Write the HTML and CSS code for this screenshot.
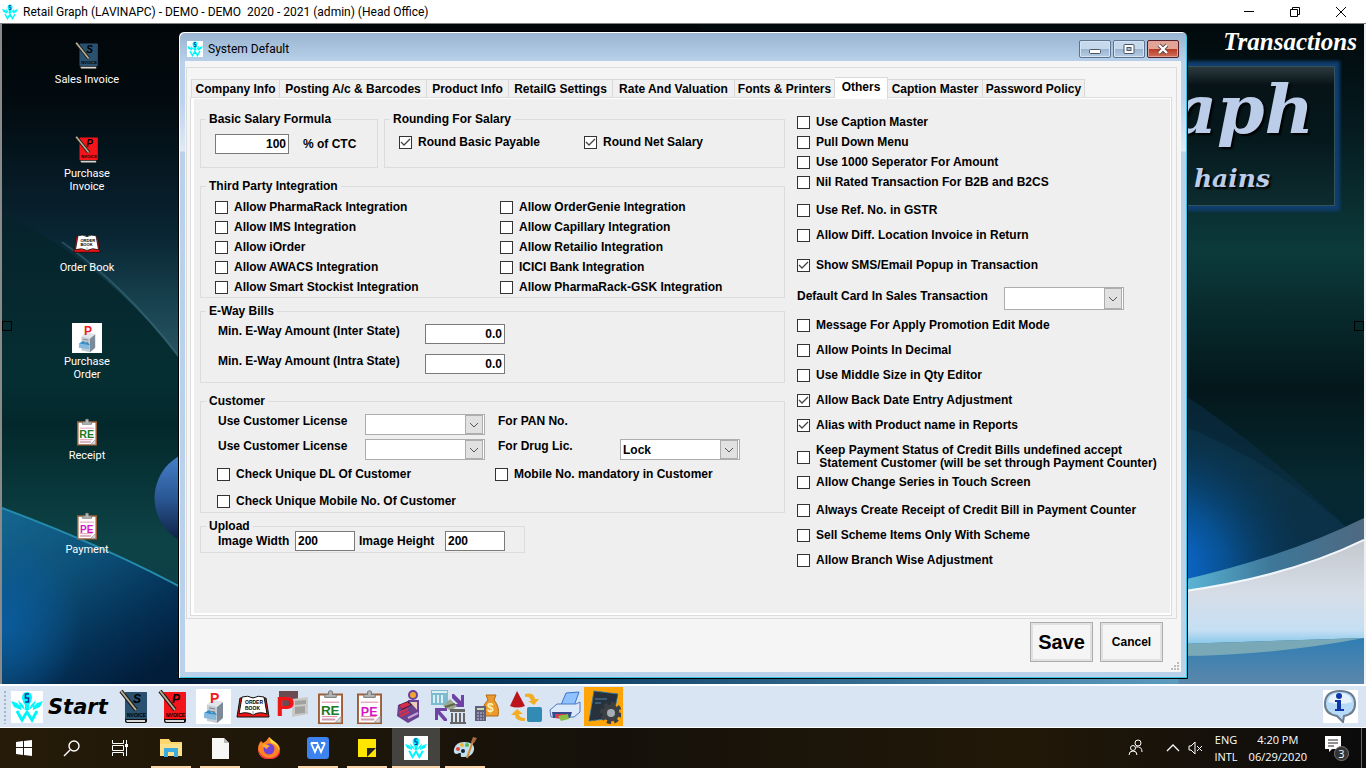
FILE: index.html
```
<!DOCTYPE html>
<html lang="en">
<head>
    <meta charset="UTF-8">
    <meta name="viewport" content="width=device-width, initial-scale=1.0">
    <title>Retail Graph</title>
    <link rel="stylesheet" href="styles.css">
</head>
<body>

    <!-- shared icons -->
    <svg class="icon-defs" width="0" height="0" aria-hidden="true">
        <symbol id="logo" viewBox="0 0 32 32">
            <path d="M16 1Q21 1 21 7Q20 12 18 14V19H14V14Q12 12 11 7Q11 1 16 1Z" fill="#00f6fb"/>
            <path d="M18 3H14.500V7H17.500V11H14" fill="none" stroke="#12309a" stroke-width="1.600"/>
            <path d="M0 10L6 12L10 16L10 19L3 16ZM32 10L26 12L22 16L22 19L29 16ZM7 9L12 14L14 19L9 15ZM25 9L20 14L18 19L23 15Z" fill="#00f6fb"/>
            <path d="M6 20L11 29L16 21L21 29L26 20" fill="none" stroke="#00f6fb" stroke-width="3"/>
        </symbol>
        <symbol id="book-blue" viewBox="0 0 32 36">
            <rect x="7" y="3" width="22" height="31" rx="2" fill="#111"/>
            <rect x="7" y="3" width="22" height="27" rx="1" fill="#2a516f"/>
            <path d="M8 31H27V33H9Z" fill="#d7d7d7"/>
        </symbol>
        <symbol id="book-red" viewBox="0 0 32 36">
            <rect x="7" y="3" width="22" height="31" rx="2" fill="#111"/>
            <rect x="7" y="3" width="22" height="27" rx="1" fill="#f5141a"/>
            <path d="M8 31H27V33H9Z" fill="#d7d7d7"/>
        </symbol>
        <symbol id="pen" viewBox="0 0 32 36">
            <path d="M3 2L18 21" stroke="#17191a" stroke-width="4"/>
            <path d="M3 2L18 21" stroke="#b8ae91" stroke-width="2"/>
        </symbol>
        <symbol id="cabinet" viewBox="0 0 35 35">
            <rect width="35" height="35" fill="#fff"/>
            <path d="M11 16L17 11L27 13V29L21 34L11 32Z" fill="#c3ccd3"/>
            <path d="M21 18L27 13V29L21 34Z" fill="#7c8b97"/>
            <path d="M11 16L17 11L27 13L21 18Z" fill="#e0e6ea"/>
            <path d="M8 24L20 26V31L8 29Z" fill="#86b9de"/>
            <path d="M8 24L13 21L16 24L18 22L21 26Z" fill="#2f8fcc"/>
            <path d="M13 19L19 20M13 22L19 23" stroke="#74828e"/>
        </symbol>
        <symbol id="open-book" viewBox="0 0 34 24">
            <path d="M4 3L1 22H33L30 3Z" fill="#f01414" stroke="#111"/>
            <path d="M6 2Q12 0 17 3Q22 0 28 2L31 19Q23 16 17 20Q11 16 3 19Z" fill="#fff" stroke="#111"/>
            <path d="M17 16V20" stroke="#999"/>
        </symbol>
        <symbol id="clipboard" viewBox="0 0 26 36">
            <path d="M1 5H25V35H1Z" fill="#fff" stroke="#a05c34" stroke-width="2"/>
            <path d="M7 8V5H11Q10 1 13 1Q16 1 15 5H19V8Z" fill="#b5b5b5" stroke="#777"/>
            <path d="M4 13H22M4 28H20" stroke="#dc7f9d"/>
            <path d="M4 31H18" stroke="#d09ab0" stroke-width="2"/>
            <path d="M18 34L24 28V34Z" fill="#ddd" stroke="#999"/>
        </symbol>
    </svg>

    <header class="titlebar">
        <svg class="titlebar-logo"><use href="#logo"/></svg>
        <h1>Retail Graph (LAVINAPC) - DEMO - DEMO&nbsp; 2020 - 2021 (admin) (Head Office)</h1>
        <button type="button" aria-label="Minimize"><svg width="12" height="12"><path d="M1 5.500H11" stroke="#000"/></svg></button>
        <button type="button" aria-label="Restore"><svg width="12" height="12"><path d="M1.500 3.500H8.500V10.500H1.500ZM3.500 3.500V1.500H10.500V8.500H8.500" fill="none" stroke="#000"/></svg></button>
        <button type="button" aria-label="Close"><svg width="12" height="12"><path d="M1 1L11 11M11 1L1 11" stroke="#000"/></svg></button>
    </header>

    <main class="desktop">
        <svg class="wallpaper" viewBox="0 0 1366 660" preserveAspectRatio="none" aria-hidden="true">
            <defs>
                <linearGradient id="night" x1="0" y1="0" x2="0" y2="1">
                    <stop offset="0" stop-color="#010609"/>
                    <stop offset="0.120" stop-color="#020b10"/>
                    <stop offset="0.320" stop-color="#092533"/>
                    <stop offset="0.420" stop-color="#17414e"/>
                    <stop offset="0.560" stop-color="#35606f"/>
                </linearGradient>
                <linearGradient id="green" x1="0" y1="0" x2="0" y2="1">
                    <stop offset="0" stop-color="#06222a"/>
                    <stop offset="0.350" stop-color="#052f33"/>
                    <stop offset="0.450" stop-color="#03282b"/>
                    <stop offset="0.700" stop-color="#0d4347"/>
                    <stop offset="1" stop-color="#0b3646"/>
                </linearGradient>
                <linearGradient id="blue" x1="0" y1="0" x2="0.700" y2="1">
                    <stop offset="0" stop-color="#146791"/>
                    <stop offset="0.400" stop-color="#0d5179"/>
                    <stop offset="0.750" stop-color="#043055"/>
                    <stop offset="1" stop-color="#021d3a"/>
                </linearGradient>
                <radialGradient id="glow">
                    <stop offset="0" stop-color="#0a5b9d"/>
                    <stop offset="1" stop-color="#0a5b9d" stop-opacity="0"/>
                </radialGradient>
                <linearGradient id="ball" x1="0" y1="0" x2="0" y2="1">
                    <stop offset="0" stop-color="#4a86d0"/>
                    <stop offset="0.500" stop-color="#2a5795"/>
                    <stop offset="1" stop-color="#0b1a38"/>
                </linearGradient>
                <linearGradient id="right" x1="0" y1="0" x2="0" y2="1">
                    <stop offset="0" stop-color="#01090b"/>
                    <stop offset="0.150" stop-color="#05191e"/>
                    <stop offset="0.350" stop-color="#0c3a3b"/>
                    <stop offset="0.480" stop-color="#062427"/>
                    <stop offset="0.560" stop-color="#03171b"/>
                    <stop offset="0.700" stop-color="#06282f"/>
                    <stop offset="0.850" stop-color="#03263a"/>
                </linearGradient>
                <radialGradient id="azure" cx="1165" cy="545" r="145" gradientUnits="userSpaceOnUse">
                    <stop offset="0" stop-color="#0c6fe0"/>
                    <stop offset="0.450" stop-color="#08508f"/>
                    <stop offset="1" stop-color="#063556" stop-opacity="0"/>
                </radialGradient>
                <linearGradient id="silver" x1="0" y1="0" x2="0" y2="1">
                    <stop offset="0" stop-color="#c3c8ce"/>
                    <stop offset="0.500" stop-color="#d6dde6"/>
                    <stop offset="0.850" stop-color="#c6dff4"/>
                    <stop offset="1" stop-color="#7fc4e6"/>
                </linearGradient>
                <linearGradient id="band" x1="0" y1="0" x2="1" y2="0">
                    <stop offset="0" stop-color="#5dbbdc"/>
                    <stop offset="0.500" stop-color="#3d7799"/>
                    <stop offset="1" stop-color="#4f6980"/>
                </linearGradient>
                <linearGradient id="sea" x1="0" y1="0" x2="0" y2="1">
                    <stop offset="0" stop-color="#2f7eb4"/>
                    <stop offset="1" stop-color="#5b87ab"/>
                </linearGradient>
                <linearGradient id="shore" x1="0" y1="0" x2="1" y2="0">
                    <stop offset="0" stop-color="#021d3a"/>
                    <stop offset="0.350" stop-color="#0a3a60"/>
                    <stop offset="1" stop-color="#5d9dc0"/>
                </linearGradient>
            </defs>
            <rect width="700" height="660" fill="url(#night)"/>
            <path d="M0 190Q110 240 190 350V660H0Z" fill="url(#green)"/>
            <path d="M60 218Q130 266 190 350" fill="none" stroke="#3c7480" stroke-opacity="0.500" stroke-width="2"/>
            <path d="M0 484Q110 525 190 569V660H0Z" fill="url(#blue)"/>
            <ellipse cx="0" cy="600" rx="80" ry="90" fill="url(#glow)"/>
            <path d="M0 484Q110 525 190 569" fill="none" stroke="#258bad" stroke-width="2"/>
            <circle cx="201" cy="474" r="48" fill="url(#ball)"/>
            <rect x="178" y="650" width="1012" height="10" fill="url(#shore)"/>
            <rect x="700" width="666" height="650" fill="url(#right)"/>
            <path d="M1180 367Q1270 425 1366 520V600H1180Z" fill="#0c2f4b" fill-opacity="0.500"/>
            <path d="M1180 400Q1280 438 1366 520V600H1180Z" fill="#123b55" fill-opacity="0.400"/>
            <path d="M1180 400H1366V600H1180Z" fill="url(#azure)"/>
            <path d="M1180 557Q1290 532 1366 494V516Q1290 553 1180 568Z" fill="url(#band)"/>
            <path d="M1180 568Q1290 553 1366 516V622H1180Z" fill="url(#silver)"/>
            <path d="M1180 568Q1290 553 1366 516" fill="none" stroke="#f1f6fc" stroke-width="2"/>
            <path d="M1180 620L1366 614V660H1180Z" fill="url(#sea)"/>
            <path d="M1180 620L1366 614Q1270 632 1180 632Z" fill="#79a9b7"/>
        </svg>

        <div class="brand">
            <span class="brand-name">aph</span>
            <span class="brand-tag">hains</span>
        </div>
        <h2 class="menu-title">Transactions</h2>
        <span class="handle handle-left"></span>
        <span class="handle handle-right"></span>

        <nav class="shortcuts">
            <a href="#">
                <svg width="28" height="30" viewBox="0 0 32 36"><use href="#book-blue"/><text x="15" y="14" class="glyph glyph-script">S</text><text x="9" y="28" class="glyph glyph-tiny">NVOICE</text><use href="#pen"/></svg>
                <span>Sales Invoice</span>
            </a>
            <a href="#">
                <svg width="28" height="30" viewBox="0 0 32 36"><use href="#book-red"/><text x="15" y="14" class="glyph glyph-script">P</text><text x="9" y="28" class="glyph glyph-tiny">NVOICE</text><use href="#pen"/></svg>
                <span>Purchase<br>Invoice</span>
            </a>
            <a href="#">
                <svg width="28" height="20" viewBox="0 0 34 24"><use href="#open-book"/><text x="9" y="9" class="glyph glyph-tiny">ORDER</text><text x="9" y="15" class="glyph glyph-tiny">BOOK</text></svg>
                <span>Order Book</span>
            </a>
            <a href="#">
                <svg width="30" height="30" viewBox="0 0 35 35"><use href="#cabinet"/><text x="14" y="14" class="glyph glyph-po">P</text></svg>
                <span>Purchase<br>Order</span>
            </a>
            <a href="#">
                <svg width="20" height="30" viewBox="0 0 26 36"><use href="#clipboard"/><text x="3" y="26" class="glyph glyph-re">RE</text></svg>
                <span>Receipt</span>
            </a>
            <a href="#">
                <svg width="20" height="30" viewBox="0 0 26 36"><use href="#clipboard"/><text x="4" y="27" class="glyph glyph-pe">PE</text></svg>
                <span>Payment</span>
            </a>
        </nav>

        <form class="window" onsubmit="return false">
            <div class="window-head">
                <svg class="window-logo"><use href="#logo"/></svg>
                <h2>System Default</h2>
                <button type="button" class="caption" aria-label="Minimize"><svg width="12" height="12"><rect x="0.500" y="6.500" width="11" height="4" rx="1" fill="#fff" stroke="#4b5563"/></svg></button>
                <button type="button" class="caption" aria-label="Maximize"><svg width="12" height="12"><rect x="1" y="1.500" width="10" height="9" rx="1" fill="#fff" stroke="#4b5563"/><rect x="4" y="4.500" width="4" height="3" fill="#a9c0d8" stroke="#4b5563"/></svg></button>
                <button type="button" class="caption caption-close" aria-label="Close"><svg width="12" height="12"><path d="M2 2L10 10M10 2L2 10" stroke="#5d4040" stroke-width="4"/><path d="M2 2L10 10M10 2L2 10" stroke="#fff" stroke-width="2.400"/></svg></button>
            </div>

            <div class="client">
                <div class="tab-panel">
                    <div class="tabs" role="tablist">
                        <button type="button" role="tab">Company Info</button>
                        <button type="button" role="tab">Posting A/c &amp; Barcodes</button>
                        <button type="button" role="tab">Product Info</button>
                        <button type="button" role="tab">RetailG Settings</button>
                        <button type="button" role="tab">Rate And Valuation</button>
                        <button type="button" role="tab">Fonts &amp; Printers</button>
                        <button type="button" role="tab" class="active" aria-selected="true">Others</button>
                        <button type="button" role="tab">Caption Master</button>
                        <button type="button" role="tab">Password Policy</button>
                    </div>

                    <div class="page">
                        <div class="col-left">
                            <div class="salary-row">
                                <fieldset>
                                    <legend>Basic Salary Formula</legend>
                                    <div class="salary">
                                        <input type="text" class="num" id="basic" value="100">
                                        <label for="basic">% of CTC</label>
                                    </div>
                                </fieldset>
                                <fieldset>
                                    <legend>Rounding For Salary</legend>
                                    <div class="rounding">
                                        <label class="check"><input type="checkbox" checked>Round Basic Payable</label>
                                        <label class="check"><input type="checkbox" checked>Round Net Salary</label>
                                    </div>
                                </fieldset>
                            </div>

                            <fieldset>
                                <legend>Third Party Integration</legend>
                                <div class="third-party">
                                    <label class="check"><input type="checkbox">Allow PharmaRack Integration</label>
                                    <label class="check"><input type="checkbox">Allow OrderGenie Integration</label>
                                    <label class="check"><input type="checkbox">Allow IMS Integration</label>
                                    <label class="check"><input type="checkbox">Allow Capillary Integration</label>
                                    <label class="check"><input type="checkbox">Allow iOrder</label>
                                    <label class="check"><input type="checkbox">Allow Retailio Integration</label>
                                    <label class="check"><input type="checkbox">Allow AWACS Integration</label>
                                    <label class="check"><input type="checkbox">ICICI Bank Integration</label>
                                    <label class="check"><input type="checkbox">Allow Smart Stockist Integration</label>
                                    <label class="check"><input type="checkbox">Allow PharmaRack-GSK Integration</label>
                                </div>
                            </fieldset>

                            <fieldset class="near">
                                <legend>E-Way Bills</legend>
                                <div class="eway">
                                    <label for="inter">Min. E-Way Amount (Inter State)</label>
                                    <input type="text" class="num" id="inter" value="0.0">
                                    <label for="intra">Min. E-Way Amount (Intra State)</label>
                                    <input type="text" class="num" id="intra" value="0.0">
                                </div>
                            </fieldset>

                            <fieldset>
                                <legend>Customer</legend>
                                <div class="license">
                                    <label for="lic1">Use Customer License</label>
                                    <span class="combo"><select id="lic1"><option></option></select><svg class="arrow"><path d="M4 7L8 11L12 7" fill="none" stroke="#555"/></svg></span>
                                    <span>For PAN No.</span>
                                    <span></span>
                                    <label for="lic2">Use Customer License</label>
                                    <span class="combo"><select id="lic2"><option></option></select><svg class="arrow"><path d="M4 7L8 11L12 7" fill="none" stroke="#555"/></svg></span>
                                    <label for="drug">For Drug Lic.</label>
                                    <span class="combo"><select id="drug"><option>Lock</option></select><svg class="arrow"><path d="M4 7L8 11L12 7" fill="none" stroke="#555"/></svg></span>
                                </div>
                                <div class="unique">
                                    <label class="check"><input type="checkbox">Check Unique DL Of Customer</label>
                                    <label class="check"><input type="checkbox">Mobile No. mandatory in Customer</label>
                                    <label class="check"><input type="checkbox">Check Unique Mobile No. Of Customer</label>
                                </div>
                            </fieldset>

                            <fieldset class="near upload-box">
                                <legend>Upload</legend>
                                <div class="upload">
                                    <label for="imgw">Image Width</label>
                                    <input type="text" id="imgw" value="200">
                                    <label for="imgh">Image Height</label>
                                    <input type="text" id="imgh" value="200">
                                </div>
                            </fieldset>
                        </div>

                        <div class="col-right">
                            <div class="checks tight">
                                <label class="check"><input type="checkbox">Use Caption Master</label>
                                <label class="check"><input type="checkbox">Pull Down Menu</label>
                                <label class="check"><input type="checkbox">Use 1000 Seperator For Amount</label>
                                <label class="check"><input type="checkbox">Nil Rated Transaction For B2B and B2CS</label>
                            </div>
                            <div class="checks">
                                <label class="check"><input type="checkbox">Use Ref. No. in GSTR</label>
                                <label class="check"><input type="checkbox">Allow Diff. Location Invoice in Return</label>
                            </div>
                            <div class="checks sms">
                                <label class="check"><input type="checkbox" checked>Show SMS/Email Popup in Transaction</label>
                            </div>
                            <div class="card-row">
                                <label for="card">Default Card In Sales Transaction</label>
                                <span class="combo"><select id="card"><option></option></select><svg class="arrow"><path d="M4 8L8 12L12 8" fill="none" stroke="#555"/></svg></span>
                            </div>
                            <div class="checks after-card">
                                <label class="check"><input type="checkbox">Message For Apply Promotion Edit Mode</label>
                                <label class="check"><input type="checkbox">Allow Points In Decimal</label>
                                <label class="check"><input type="checkbox">Use Middle Size in Qty Editor</label>
                                <label class="check"><input type="checkbox" checked>Allow Back Date Entry Adjustment</label>
                                <label class="check"><input type="checkbox" checked>Alias with Product name in Reports</label>
                            </div>
                            <div class="checks">
                                <label class="check check-two"><input type="checkbox"><span>Keep Payment Status of Credit Bills undefined accept<br>&nbsp;Statement Customer (will be set through Payment Counter)</span></label>
                                <label class="check after-two"><input type="checkbox">Allow Change Series in Touch Screen</label>
                            </div>
                            <div class="checks">
                                <label class="check"><input type="checkbox">Always Create Receipt of Credit Bill in Payment Counter</label>
                                <label class="check"><input type="checkbox">Sell Scheme Items Only With Scheme</label>
                                <label class="check"><input type="checkbox">Allow Branch Wise Adjustment</label>
                            </div>
                        </div>
                    </div>
                </div>

                <div class="actions">
                    <button type="submit" class="save">Save</button>
                    <button type="button">Cancel</button>
                </div>
                <svg class="grip" width="9" height="9"><path d="M6 0h2v2h-2zM3 3h2v2h-2zM6 3h2v2h-2zM0 6h2v2h-2zM3 6h2v2h-2zM6 6h2v2h-2z" fill="#bdbdbd"/></svg>
            </div>
        </form>
    </main>

    <div class="toolbar">
        <svg class="drag" width="4" height="34"><path d="M2 1V34" stroke="#a9b4c2" stroke-width="2" stroke-dasharray="2 2"/></svg>
        <button type="button" class="start"><svg width="32" height="32"><use href="#logo"/></svg>Start</button>
        <div class="tools">
            <button type="button" aria-label="Sales Invoice">
                <svg width="32" height="36" viewBox="0 0 32 36"><use href="#book-blue"/><text x="15" y="14" class="glyph glyph-script">S</text><text x="9" y="28" class="glyph glyph-tiny">NVOICE</text><use href="#pen"/></svg>
            </button>
            <button type="button" aria-label="Purchase Invoice">
                <svg width="32" height="36" viewBox="0 0 32 36"><use href="#book-red"/><text x="15" y="14" class="glyph glyph-script">P</text><text x="9" y="28" class="glyph glyph-tiny">NVOICE</text><use href="#pen"/></svg>
            </button>
            <button type="button" class="split" aria-label="Purchase Order">
                <svg width="35" height="35" viewBox="0 0 35 35"><use href="#cabinet"/><text x="14" y="14" class="glyph glyph-po">P</text></svg>
            </button>
            <button type="button" aria-label="Order Book">
                <svg width="34" height="24" viewBox="0 0 34 24"><use href="#open-book"/><text x="9" y="9" class="glyph glyph-tiny">ORDER</text><text x="9" y="15" class="glyph glyph-tiny">BOOK</text></svg>
            </button>
            <button type="button" aria-label="Purchase Return">
                <svg width="34" height="36"><path d="M4 2H23V18H4Z" fill="#6b4a52"/><path d="M17 10L33 8V25L17 28Z" fill="#c9c9c6"/><path d="M20 12L31 11V15L20 16ZM20 18L30 17V24L20 25Z" fill="#a1a29f"/><text x="1" y="27" class="glyph glyph-big">P</text></svg>
            </button>
            <button type="button" aria-label="Receipt">
                <svg width="25" height="36" viewBox="0 0 26 36"><use href="#clipboard"/><text x="3" y="26" class="glyph glyph-re">RE</text></svg>
            </button>
            <button type="button" aria-label="Payment">
                <svg width="25" height="36" viewBox="0 0 26 36"><use href="#clipboard"/><text x="4" y="27" class="glyph glyph-pe">PE</text></svg>
            </button>
            <button type="button" aria-label="Cash Counter">
                <svg width="28" height="36"><circle cx="18" cy="6" r="4" fill="#f2a531" stroke="#6b3f9e" stroke-width="2"/><path d="M14 12H23V25L13 22Z" fill="#e6d0b8" stroke="#6b3f9e" stroke-width="2"/><path d="M3 16L14 12L24 23V28L13 34L2 27Z" fill="#6a4390"/><path d="M4 16L13 12L17 16L7 21Z" fill="#3b1a30"/><path d="M5 17L13 14M6 19L15 15M4 24L13 20M5 27L14 23" stroke="#d42e4c" stroke-width="2"/><path d="M13 29L23 24" stroke="#c6a2d8" stroke-width="2"/></svg>
            </button>
            <button type="button" aria-label="Bank Transfer">
                <svg width="36" height="36"><rect x="1" y="1" width="17" height="15" fill="#7dbcd0"/><path d="M2 3H17M4 6V14M8 6V14M12 6V14" stroke="#dceff4" stroke-width="2"/><path d="M22 5L24 5L31 12V6H34V18H22V15H28L22 9Z" fill="#6f43a6"/><path d="M17 32H14L8 25V31H5V19H17V22H10L17 30Z" fill="#6f43a6"/><path d="M13 17L20 10L27 17L21 22Z" fill="#9aa68d"/><path d="M15 18L25 15" stroke="#5a6647" stroke-width="2"/><path d="M20 20H35V23H20Z" fill="#666"/><path d="M22 24V33M26 24V33M30 24V33M34 24V33M20 34H36" stroke="#666" stroke-width="2"/></svg>
            </button>
            <button type="button" aria-label="Accounts">
                <svg width="26" height="30"><path d="M12 3H22L20 8Q26 15 24 24H10Q6 16 14 8Z" fill="#ec9a2c" stroke="#b56a14"/><text x="13" y="20" class="glyph glyph-money">$</text><rect x="1" y="14" width="11" height="15" fill="#61617f"/><path d="M3 17H10" stroke="#c9dcaa" stroke-width="2"/><path d="M3 21H10M3 24H10M3 27H10" stroke="#c3c3d4" stroke-dasharray="2 1"/></svg>
            </button>
            <button type="button" aria-label="Convert">
                <svg width="34" height="34"><path d="M8 1L16 16Q8 19 1 16Z" fill="#bb151b"/><path d="M16 4Q25 2 26 9L30 9L25 15L19 11H22Q21 6 16 7Z" fill="#f3ae26"/><path d="M16 31Q6 31 6 25H2L8 19L14 24H10Q10 28 16 28Z" fill="#f3ae26"/><rect x="18" y="17" width="15" height="15" rx="2" fill="#318bb5"/></svg>
            </button>
            <button type="button" aria-label="Print">
                <svg width="34" height="34"><path d="M13 15L18 3L31 2L26 16Z" fill="#8fc2ff" stroke="#3974cd"/><path d="M2 20L9 14H28L32 12V22L26 27H3Z" fill="#dce9fb" stroke="#4d78c0"/><path d="M4 22H24L22 28H5Z" fill="#35488c"/><path d="M7 24H17L14 29L7 28Z" fill="#d73c4b"/><path d="M10 26L20 24L21 29L13 31Z" fill="#88bd45"/></svg>
            </button>
            <button type="button" class="tool-on" aria-label="System Default">
                <svg width="34" height="36"><path d="M7 2L31 5L26 29L2 32Z" fill="#27323c" stroke="#2e79a8" stroke-dasharray="4 1"/><path d="M8 10H20M8 14H14" stroke="#4c88ae"/><circle cx="24" cy="24" r="6" fill="none" stroke="#3c4045" stroke-width="5"/><circle cx="24" cy="24" r="9" fill="none" stroke="#3c4045" stroke-width="4" stroke-dasharray="4 3"/><circle cx="24" cy="24" r="4" fill="#a5adb5"/></svg>
            </button>
        </div>
        <button type="button" class="info" aria-label="Help">
            <svg width="35" height="33"><rect width="35" height="33" fill="#fff"/><path d="M17 1Q32 1 32 14Q32 24 21 26L20 32L14 26Q2 24 2 14Q2 1 17 1Z" fill="#b6daf8" stroke="#6c7c8c" stroke-width="2"/><path d="M17 3Q28 3 29 12Q17 16 5 12Q6 3 17 3Z" fill="#e6f3ff"/><circle cx="16" cy="6" r="3" fill="#0f37a8"/><path d="M12 10H18V19H21V21H12V19H14V12H12Z" fill="#0f37a8"/></svg>
        </button>
    </div>

    <footer class="taskbar">
        <button type="button" aria-label="Windows"><svg width="18" height="18"><path d="M1 3L8 2V8H1ZM9 2L17 1V8H9ZM1 9H8V16L1 15ZM9 9H17V17L9 16Z" fill="#fff"/></svg></button>
        <button type="button" aria-label="Search"><svg width="18" height="18"><circle cx="11" cy="7" r="5" fill="none" stroke="#fff" stroke-width="1.400"/><path d="M7 11L1 17" stroke="#fff" stroke-width="1.400"/></svg></button>
        <button type="button" aria-label="Task View"><svg width="18" height="18"><path d="M1.500 1V4.500H12.500V1M1.500 17V13.500H12.500V17M1.500 6.500H12.500V11.500H1.500ZM15.500 1V17" fill="none" stroke="#fff"/><path d="M14 5H17V8H14Z" fill="#fff"/></svg></button>
        <button type="button" class="app first open" aria-label="File Explorer"><svg width="22" height="20"><path d="M0 1H9L11 4H22V18H0Z" fill="#fbd66c"/><path d="M0 6H22V18H0Z" fill="#fde08a"/><path d="M4 10H18V19H14V14H8V19H4Z" fill="#3dabe0"/></svg></button>
        <button type="button" class="app open" aria-label="Document"><svg width="17" height="21"><path d="M0 0H12L17 5V21H0Z" fill="#f7f7f7"/><path d="M12 0V5H17Z" fill="#bbb"/></svg></button>
        <button type="button" class="app" aria-label="Firefox"><svg width="24" height="24"><path d="M12 1Q14 4 18 6Q23 9 23 14Q22 23 12 23Q2 23 1 14Q1 8 4 5L6 7Q10 5 12 1Z" fill="#ff8422"/><path d="M12 1Q14 3 18 6Q22 9 22 14Q20 8 14 7Z" fill="#ffdc3e"/><path d="M1 13Q5 23 14 22Q21 21 23 13Q24 23 12 23Q2 23 1 13Z" fill="#f7294e"/><circle cx="12" cy="13" r="5.500" fill="#7542d8"/><path d="M5 9Q9 7 13 10Q10 11 10 13Q8 12 5 9Z" fill="#ffb02b"/></svg></button>
        <button type="button" class="app open" aria-label="Writer"><svg width="22" height="22"><rect width="22" height="22" rx="3" fill="#3c83f0"/><path d="M4 6L8 15L11 8L14 15L18 6M4 6H11M14 6H18" fill="none" stroke="#fff" stroke-width="1.800"/></svg></button>
        <button type="button" class="app open" aria-label="Sticky Notes"><svg width="18" height="18"><path d="M0 0H18V18H0Z" fill="#ffe600"/><path d="M9 18V9H18Z" fill="#222"/></svg></button>
        <button type="button" class="app open current" aria-label="Retail Graph"><svg width="24" height="24"><rect width="24" height="24" fill="#fff"/><use href="#logo" width="22" height="22" x="1" y="1"/></svg></button>
        <button type="button" class="app open" aria-label="Paint"><svg width="24" height="24"><path d="M11 6Q22 6 21 14Q19 22 9 21Q7 21 8 18Q8 16 4 18Q0 18 1 13Q3 6 11 6Z" fill="#bfe0f0"/><circle cx="5" cy="13" r="2" fill="#e34a3c"/><circle cx="9" cy="9" r="2" fill="#f2b632"/><circle cx="14" cy="9" r="2" fill="#57b948"/><circle cx="10" cy="15" r="2" fill="#15232d"/><path d="M14 22L20 5" stroke="#d88a32" stroke-width="2"/><path d="M18 6L20 1L24 2L21 7Z" fill="#a86a3a"/></svg></button>

        <div class="tray">
            <svg class="people" width="16" height="18"><circle cx="10" cy="4" r="3" fill="none" stroke="#fff"/><circle cx="5" cy="9" r="2.500" fill="none" stroke="#fff"/><path d="M1 16Q1 12 5 12Q9 12 9 16M8 8Q14 7 14 13" fill="none" stroke="#fff"/></svg>
            <svg width="14" height="10"><path d="M1 8L7 2L13 8" fill="none" stroke="#fff" stroke-width="1.300"/></svg>
            <svg class="sound" width="16" height="14"><path d="M1 5H3L7 1V13L3 9H1ZM9 5L14 10M14 5L9 10" fill="none" stroke="#fff"/></svg>
            <div class="lang"><span>ENG</span><span>INTL</span></div>
            <div class="clock"><time>4:20 PM</time><time>06/29/2020</time></div>
            <button type="button" class="notify" aria-label="Notifications"><svg width="24" height="26"><path d="M0 1H16V14H7L4 17V14H0Z" fill="#fff"/><path d="M3 5H13M3 8H13M3 11H9" stroke="#222"/></svg><span>3</span></button>
        </div>
    </footer>

</body>
</html>
```
FILE: styles.css
```
* {
    box-sizing: border-box;
}

body {
    margin: 0;
    height: 100vh;
    display: flex;
    flex-direction: column;
    overflow: hidden;
    font-family: "Liberation Sans", Arial, sans-serif;
    font-size: 12px;
    color: #000;
}

h1, h2 {
    margin: 0;
    font-size: 12px;
    font-weight: normal;
}

button {
    margin: 0;
    padding: 0;
    border: none;
    background: none;
    font: inherit;
    color: inherit;
}

svg {
    display: block;
    flex: none;
}

.icon-defs {
    position: absolute;
}

.glyph {
    font-family: "Liberation Sans", Arial, sans-serif;
    font-weight: bold;
}

.glyph-script {
    font-size: 12px;
    font-style: italic;
}

.glyph-tiny {
    font-size: 5px;
}

.glyph-re {
    font-size: 14px;
    fill: #1c7a26;
}

.glyph-pe {
    font-size: 13px;
    fill: #d614c4;
}

.glyph-po {
    font-size: 14px;
    fill: #ee1c1c;
}

.glyph-big {
    font-size: 28px;
    fill: #f01414;
}

.glyph-money {
    font-size: 12px;
    fill: #fff3c0;
}

/* application title bar */
.titlebar {
    height: 24px;
    display: flex;
    align-items: center;
    padding-right: 2px;
    background: #fff;
    border-bottom: 1px solid #7f7f7f;
    font-family: Roboto, "Open Sans", sans-serif;
}

.titlebar-logo {
    width: 16px;
    height: 16px;
    margin: 0 5px 0 2px;
}

.titlebar h1 {
    flex: 1;
    white-space: nowrap;
}

.titlebar button {
    width: 46px;
    height: 20px;
    display: flex;
    align-items: center;
    justify-content: center;
}

/* desktop */
.desktop {
    flex: 1;
    position: relative;
    overflow: hidden;
    background: #02090c;
    border-left: 2px solid #8a8a8a;
    border-right: 2px solid #f0f0f0;
}

.wallpaper {
    position: absolute;
    inset: 0;
    width: 100%;
    height: 100%;
}

.brand {
    position: absolute;
    top: 42px;
    right: 29px;
    width: 220px;
    height: 140px;
    border: 1px solid #34545c;
    background: linear-gradient(#2c3a3f 0, #071317 18px, #05181c 50%, #0d2c2f);
    box-shadow: 0 0 3px 5px #0f3d6d;
    font-family: "DejaVu Serif", serif;
    font-weight: bold;
    font-style: italic;
    color: #bccde9;
    text-align: right;
    text-shadow: 2px 2px 2px #000;
}

.brand-name {
    display: block;
    padding: 2px 20px 0 0;
    font-size: 68px;
    line-height: 80px;
}

.brand-tag {
    display: block;
    padding: 18px 64px 0 0;
    font-size: 25px;
    line-height: 24px;
}

.menu-title {
    position: absolute;
    top: 4px;
    right: 7px;
    font-family: "Liberation Serif", serif;
    font-size: 25px;
    line-height: 28px;
    font-weight: bold;
    font-style: italic;
    color: #fff;
}

.handle {
    position: absolute;
    top: 297px;
    width: 10px;
    height: 10px;
    border: 1px solid #000;
}

.handle-left {
    left: 0;
}

.handle-right {
    right: 0;
}

.shortcuts {
    position: absolute;
    top: 15px;
    left: 29px;
    width: 112px;
}

.shortcuts a {
    height: 94px;
    display: flex;
    flex-direction: column;
    align-items: center;
    font-family: Roboto, "Liberation Sans", sans-serif;
    font-size: 11px;
    line-height: 13px;
    color: #fff;
    text-align: center;
    text-decoration: none;
}

.shortcuts svg {
    margin: auto 0;
}

.shortcuts span {
    height: 60px;
}

/* dialog window */
.window {
    position: absolute;
    top: 7px;
    right: 176px;
    bottom: 5px;
    left: 176px;
    display: flex;
    flex-direction: column;
    padding: 0 6px 6px;
    border: 1px solid #000;
    border-radius: 6px 6px 0 0;
    background: linear-gradient(#99b4d1 0, #b9d1ea 30px, #bcd3ef 70px, #dfeaf6 119px, #b9d1ea 120px);
    box-shadow: inset 1px 1px #fff, inset -1px -1px #35c6e4;
}

.window-head {
    height: 29px;
    display: flex;
    align-items: center;
    gap: 2px;
    padding: 5px 2px 0;
    font-family: Roboto, "Open Sans", sans-serif;
}

.window-head h2 {
    flex: 1;
    padding-left: 3px;
}

.window-logo {
    width: 16px;
    height: 16px;
    background: #fff;
}

.caption {
    width: 32px;
    height: 18px;
    display: flex;
    align-items: center;
    justify-content: center;
    border: 1px solid #5c7490;
    border-radius: 2px;
    background: linear-gradient(#c5d8ec 50%, #99b3cf 50%, #b5cce4);
    box-shadow: inset 0 0 0 1px #d5e3f2;
}

.caption-close {
    border-color: #54202a;
    background: linear-gradient(#e3a498 50%, #b83a22 50%, #d0705a);
    box-shadow: inset 0 0 0 1px #e0a298;
}

.client {
    flex: 1;
    position: relative;
    display: flex;
    flex-direction: column;
    min-height: 0;
    padding: 6px 4px 0 1px;
    background: #f5f5f5;
    font-weight: bold;
}

.tab-panel {
    flex: 1;
    display: flex;
    flex-direction: column;
    min-height: 0;
    padding: 9px 4px 2px 3px;
    border: 1px solid #dcdcdc;
}

.tabs {
    display: grid;
    grid-template-columns: 89px 147px 82px 104px 122px 100px 53px 95px 102px;
    align-items: end;
    padding-left: 1px;
    height: 20px;
}

.tabs button {
    height: 18px;
    border: 1px solid #d9d9d9;
    border-width: 1px 1px 0 0;
    background: #f0f0f0;
    white-space: nowrap;
}

.tabs button:first-child {
    border-left-width: 1px;
}

.tabs .active {
    height: 22px;
    margin-bottom: -2px;
    padding-bottom: 4px;
    background: #fff;
    z-index: 1;
}

.page {
    flex: 1;
    display: grid;
    grid-template-columns: 585px 1fr;
    gap: 12px;
    padding: 14px 0 0 9px;
    border: 1px solid #dcdcdc;
    background: #efefef;
    box-shadow: inset 3px 1px #fff, inset -1px -2px #fff;
}

/* form parts */
fieldset {
    min-width: 0;
    margin: 11px 0 0;
    padding: 0 5px;
    border: 1px solid #dcdcdc;
}

fieldset.near {
    margin-top: 6px;
}

legend {
    padding: 0 3px;
    line-height: 14px;
}

input[type="text"], select {
    height: 20px;
    margin: 0;
    padding: 0 2px;
    border: 1px solid #7a7a7a;
    border-radius: 0;
    background: #fff;
    color: #000;
    font: bold 12px "Liberation Sans", Arial, sans-serif;
}

input.num {
    text-align: right;
}

.check {
    height: 20px;
    display: flex;
    align-items: center;
    gap: 6px;
    white-space: nowrap;
}

.check input {
    appearance: none;
    flex: none;
    width: 13px;
    height: 13px;
    margin: 0;
    border: 1px solid #333;
    background: #fff;
}

.check input:checked {
    background: #fff url("data:image/svg+xml,%3Csvg xmlns='http://www.w3.org/2000/svg' width='11' height='11'%3E%3Cpath d='M1 5L4 8L10 2' fill='none' stroke='%23444' stroke-width='1.3'/%3E%3C/svg%3E");
}

.combo {
    position: relative;
    display: block;
    width: 120px;
}

.combo select {
    appearance: none;
    display: block;
    width: 100%;
    height: 21px;
    border-color: #adadad;
}

.arrow {
    position: absolute;
    top: 1px;
    right: 2px;
    width: 18px;
    height: calc(100% - 2px);
    border: 1px solid #adadad;
    background: #e1e1e1;
    pointer-events: none;
}

/* left column */
.salary-row {
    display: grid;
    grid-template-columns: 178px 1fr;
    gap: 6px;
}

.salary-row fieldset {
    height: 56px;
    margin: 0;
}

.salary {
    display: flex;
    align-items: center;
    gap: 14px;
    padding: 8px 9px 0;
}

.salary input {
    width: 74px;
}

.rounding {
    display: grid;
    grid-template-columns: 185px 1fr;
    padding: 6px 9px 0;
}

.third-party {
    display: grid;
    grid-template-columns: 285px 1fr;
    padding: 4px 9px 0;
}

.eway {
    display: grid;
    grid-template-columns: 207px 80px;
    row-gap: 10px;
    padding: 6px 12px 8px;
    line-height: 14px;
}

.license {
    display: grid;
    grid-template-columns: 147px 133px 122px 120px;
    row-gap: 4px;
    padding: 6px 12px 0;
    line-height: 14px;
}

.unique {
    display: grid;
    grid-template-columns: 278px 1fr;
    row-gap: 7px;
    padding: 4px 11px 1px;
}

.upload-box {
    width: 325px;
}

.upload {
    display: grid;
    grid-template-columns: 77px 60px 90px 60px;
    align-items: center;
    margin-top: -2px;
    padding: 0 12px 1px;
}

.upload label + input + label {
    padding-left: 4px;
}

/* right column */
.checks {
    display: flex;
    flex-direction: column;
    gap: 5px;
    margin-top: 8px;
}

.checks.tight {
    gap: 0;
    margin-top: 0;
}

.checks.sms {
    margin-top: 10px;
}

.card-row {
    display: flex;
    gap: 16px;
    margin-top: 12px;
    line-height: 18px;
}

.card-row select {
    height: 23px;
}

.checks.after-card {
    margin-top: 5px;
}

.check-two {
    height: 28px;
    line-height: 13px;
}

.after-two {
    margin-top: -4px;
}

.actions {
    display: flex;
    justify-content: flex-end;
    gap: 7px;
    padding: 3px 14px 10px;
}

.actions button {
    width: 63px;
    height: 40px;
    border: 1px solid #adadad;
    background: #f5f5f5;
    box-shadow: inset 0 0 0 2px #e1e1e1;
}

.actions .save {
    font-size: 20px;
}

.grip {
    position: absolute;
    right: 1px;
    bottom: 1px;
}

/* application toolbar */
.toolbar {
    height: 44px;
    display: flex;
    align-items: center;
    padding: 0 8px 0 3px;
    border-top: 2px solid #fff;
    border-bottom: 1px solid #fff;
    background: #d9e5f2;
}

.start {
    display: flex;
    align-items: center;
    gap: 5px;
    width: 103px;
    margin-left: 4px;
    font: italic bold 21px "DejaVu Sans", Verdana, sans-serif;
}

.start svg {
    background: #fff;
}

.tools {
    flex: 1;
    display: flex;
}

.tools button {
    width: 39px;
    height: 39px;
    display: flex;
    align-items: center;
    justify-content: center;
}

.tools .split {
    margin-left: 2px;
}

.tools .tool-on {
    background: #ffa509;
}

/* system taskbar */
.taskbar {
    height: 40px;
    display: flex;
    background: linear-gradient(90deg, #261b08, #15110a 45%, #221808 75%, #0b0b0c);
    color: #fff;
}

.taskbar > button {
    width: 48px;
    display: flex;
    align-items: center;
    justify-content: center;
    position: relative;
}

.taskbar .app {
    margin-right: 1px;
}

.taskbar .first {
    margin-left: 3px;
}

.open::after {
    content: "";
    position: absolute;
    right: 4px;
    bottom: 0;
    left: 4px;
    height: 2px;
    background: #f8d4a8;
}

.current {
    background: #45433f;
}

.current::after {
    right: 0;
    left: 0;
}

.tray {
    flex: 1;
    display: flex;
    justify-content: flex-end;
    align-items: center;
    margin-right: 4px;
    padding-right: 12px;
    border-right: 1px solid #666;
    font-family: "Open Sans", "Noto Sans", sans-serif;
    line-height: 17px;
}

.people {
    margin-right: 22px;
}

.sound {
    margin: 0 10px 0 8px;
}

.lang, .clock {
    display: flex;
    flex-direction: column;
    align-items: center;
    font-size: 11px;
}

.clock {
    margin: 0 18px 0 11px;
}

.notify {
    position: relative;
}

.notify span {
    position: absolute;
    right: 0;
    bottom: 0;
    width: 15px;
    height: 15px;
    border: 1px solid #777;
    border-radius: 50%;
    background: #333;
    font-size: 11px;
    line-height: 13px;
    text-align: center;
}
```
